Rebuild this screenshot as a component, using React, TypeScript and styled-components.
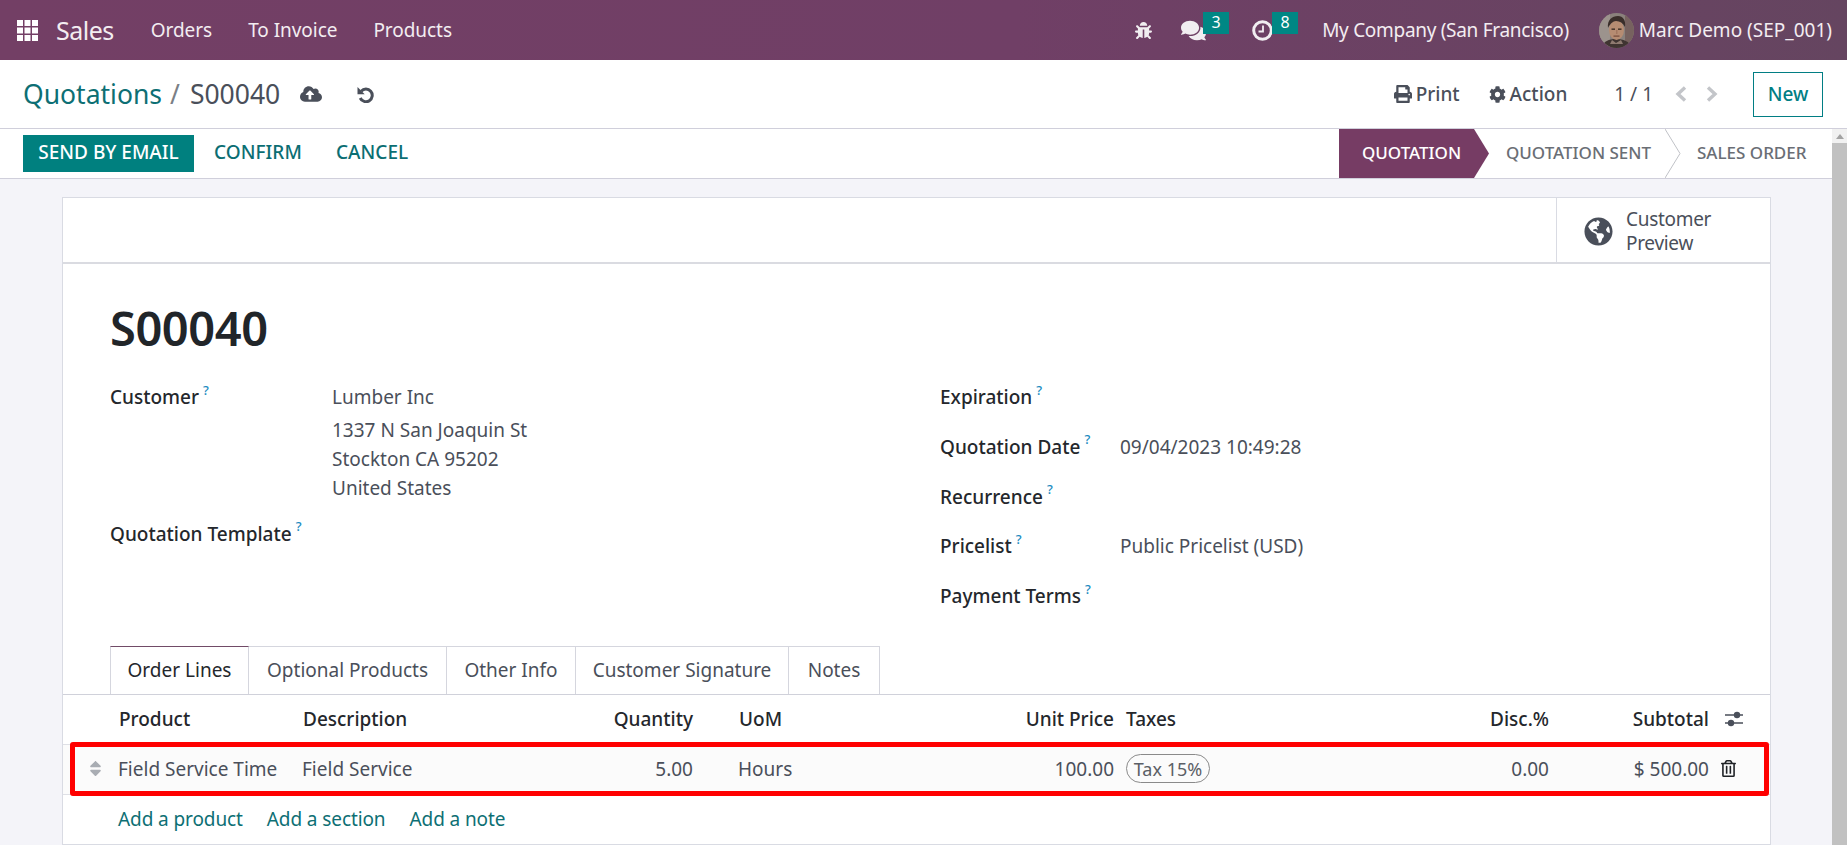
import React from "react";
import styled, { createGlobalStyle } from "styled-components";
import { FaBug, FaComments, FaPrint, FaCog, FaCloudUploadAlt, FaGlobeAmericas, FaRegTrashAlt, FaSort } from "react-icons/fa";

const Global = createGlobalStyle`
  html, body { margin: 0; padding: 0; height: 100%; overflow: hidden; background: #fff; }
  body { font-family: "Noto Sans", "Open Sans", sans-serif; color: #4a4f5a; }
  * { box-sizing: border-box; }
`;

const Page = styled.div`
  width: 1847px; height: 845px; display: flex; flex-direction: column; overflow: hidden;
`;
const Navbar = styled.header`
  height: 60px; flex: none; display: flex; align-items: center; padding: 0 15px 0 17px; color: #f3edf1;
  background: linear-gradient(90deg, #733f65 0%, #703f66 55%, #654560 100%);
`;
const AppGrid = styled.svg`width: 21px; height: 21px; fill: #fff; flex: none;`;
const Brand = styled.span`font-size: 25px; margin-left: 18px; margin-right: 37px; letter-spacing: -0.5px;`;
const MenuItem = styled.span`font-size: 19px; margin-right: 36px; letter-spacing: -0.05px;`;
const Spacer = styled.div`flex: 1;`;
const NavIconWrap = styled.span<{ $mr: number }>`
  position: relative; display: flex; align-items: center; margin-right: ${p => p.$mr}px; color: #f1eef1;
`;
const Badge = styled.span<{ $left: number; $top: number }>`
  position: absolute; left: ${p => p.$left}px; top: ${p => p.$top}px; width: 26px; height: 22px; background: #008784; color: #fff;
  font-size: 16px; display: flex; align-items: center; justify-content: center; padding-bottom: 2px;
`;
const NavText = styled.span<{ $ls: number }>`font-size: 19px; letter-spacing: ${p => p.$ls}px; white-space: nowrap;`;
const Avatar = styled.svg`width: 35px; height: 35px; margin: 0 5px 0 30px; flex: none;`;
const ClockIcon = styled.svg`width: 21px; height: 21px; display: block;`;

const ControlPanel = styled.div`
  height: 69px; flex: none; display: flex; align-items: center; padding: 0 24px; background: #fff;
  border-bottom: 1px solid #d0cfdb;
`;
const Crumb = styled.a`font-size: 26.5px; color: #0d6f74; margin-left: -1px;`;
const CrumbSep = styled.span`font-size: 26.5px; color: #7b7f86; margin: 0 10px 0 8px;`;
const CrumbCur = styled.span`font-size: 26.5px; color: #4a4f5a;`;
const SaveIcon = styled.span<{ $ml: number }>`display: flex; margin-left: ${p => p.$ml}px; color: #4a4f5a;`;
const UndoIcon = styled.svg`width: 17px; height: 17px; display: block;`;
const CpAction = styled.span<{ $ml?: number }>`
  display: flex; align-items: center; gap: 4px; font-size: 19px; color: #4a4f5a; font-weight: 500; margin-left: ${p => p.$ml ?? 0}px;
`;
const CpRight = styled.div`display: flex; align-items: center;`;
const Pager = styled.span`font-size: 19px; color: #4a4f5a; margin-left: 47px;`;
const PagerArrow = styled.svg<{ $ml: number }>`width: 12px; height: 16px; display: block; margin-left: ${p => p.$ml}px;`;
const NewBtn = styled.button`
  width: 70px; height: 45px; margin-left: 35px; background: #fff; border: 1px solid #017e84; color: #017e84;
  font: 500 19px "Noto Sans", sans-serif; padding: 0;
`;

const Body = styled.div`flex: 1; display: flex; min-height: 0; background: #f4f4f9;`;
const Scroll = styled.div`flex: 1; min-width: 0; display: flex; flex-direction: column;`;
const StatusRow = styled.div`
  height: 50px; flex: none; display: flex; align-items: center; justify-content: space-between; background: #fff;
  border-bottom: 1px solid #d0cfdb; padding-left: 23px;
`;
const Btns = styled.div`display: flex; align-items: center;`;
const Primary = styled.button`
  width: 171px; height: 37px; background: #00807f; border: 0; color: #fff; padding: 0 0 3px;
  font: 500 19px "Noto Sans", sans-serif;
`;
const Secondary = styled.span<{ $ml: number }>`
  margin-left: ${p => p.$ml}px; color: #0b6e73; font-size: 19px; font-weight: 500; padding-bottom: 3px; letter-spacing: 0.05px;
`;
const Stages = styled.div`display: flex; height: 49px; align-items: center; position: relative;`;
const StageActive = styled.div`
  width: 150px; height: 49px; padding-left: 23px; padding-bottom: 2px; display: flex; align-items: center; color: #fff; background: #763c64;
  font-size: 17px; font-weight: 500; clip-path: polygon(0 0, 135px 0, 100% 50%, 135px 100%, 0 100%);
`;
const Stage = styled.div<{ $w: number; $pl: number }>`
  width: ${p => p.$w}px; padding-left: ${p => p.$pl}px; padding-bottom: 2px; color: #6a6e75; font-size: 17px; font-weight: 500;
  white-space: nowrap;
`;
const StageChevron = styled.svg`width: 16px; height: 49px; flex: none;`;
const Track = styled.div`
  width: 15px; flex: none; background: #f1f1f1; display: flex; flex-direction: column; align-items: center;
`;
const ArrowUp = styled.div`
  margin: 5px 0 4px; width: 0; height: 0; border-left: 4px solid transparent; border-right: 4px solid transparent;
  border-bottom: 5px solid #a3a3a3;
`;
const Thumb = styled.div`flex: 1; width: 100%; background: #c1c1c1;`;

const Sheet = styled.main`
  width: 1709px; margin: 18px 0 0 62px; background: #fff; border: 1px solid #d9dbe3; flex: none; height: 648px;
`;
const ButtonBox = styled.div`
  height: 66px; display: flex; justify-content: flex-end; border-bottom: 2px solid #dadbe1;
`;
const StatButton = styled.div`
  width: 214px; display: flex; align-items: center; padding: 2px 0 0 27px; gap: 13px; border-left: 1px solid #d9dbe3;
  color: #4a4f5a; font-size: 19px; line-height: 24px; letter-spacing: -0.3px;
`;
const SheetBody = styled.div`padding: 34px 0 0 0;`;
const Title = styled.h1`
  margin: 0 0 25px 47px; font-size: 47px; line-height: 60px; font-weight: 600; color: #212529; letter-spacing: -0.45px;
`;
const FormGrid = styled.div`display: grid; grid-template-columns: 830px 1fr; padding-left: 47px;`;
const FormCol = styled.div<{ $gap: number }>`display: flex; flex-direction: column; gap: ${p => p.$gap}px;`;
const Row = styled.div<{ $lw: number }>`display: grid; grid-template-columns: ${p => p.$lw}px 1fr; line-height: 29px; font-size: 19px;`;
const Label = styled.label`font-weight: 500; color: #24272c; white-space: nowrap;`;
const Help = styled.sup`color: #1a8bbf; font-size: 13px; font-weight: 500; margin-left: 4px; line-height: 0; position: relative; top: -2px;`;
const Value = styled.div`color: #4a4f5a;`;
const NameLine = styled.div`margin-bottom: 4px;`;

const Tabs = styled.nav`
  margin-top: 35px; height: 49px; display: flex; padding-left: 47px; border-bottom: 1px solid #d0d1da;
`;
const Tab = styled.div<{ $w: number; $active?: boolean }>`
  width: ${p => p.$w}px; height: 48px; display: flex; align-items: center; justify-content: center; padding-bottom: 2px;
  font-size: 19px; white-space: nowrap;
  color: ${p => (p.$active ? "#24272c" : "#4a4f5a")};
  border: 1px solid #d5d6de; border-left-width: ${p => (p.$active ? 1 : 0)}px; border-bottom: 0;
  border-top: 1px solid ${p => (p.$active ? "#714b67" : "#d5d6de")};
`;
const COLS = "56px 184px 250px 140px 221px 200px 335px 100px 160px 61px";
const HeadRow = styled.div`
  display: grid; grid-template-columns: ${COLS}; height: 50px; align-items: center; font-size: 19px; font-weight: 500;
  color: #24272c; border-bottom: 1px solid #dfe0e6; padding-bottom: 1px;
`;
const LineRow = styled.div`
  position: relative; display: grid; grid-template-columns: ${COLS}; height: 50px; align-items: center; font-size: 19px;
  color: #4a4f5a; background: #fbfbfb; border-bottom: 1px solid #dfe0e6; padding-bottom: 2px;
`;
const Cell = styled.div<{ $right?: boolean; $pl?: number; $ml?: number }>`
  text-align: ${p => (p.$right ? "right" : "left")}; padding-left: ${p => p.$pl ?? 0}px; margin-left: ${p => p.$ml ?? 0}px; white-space: nowrap;
`;
const Handle = styled.div`display: flex; justify-content: flex-end; padding-right: 14px; color: #a9adb3;`;
const TaxPill = styled.span`
  display: inline-flex; align-items: center; justify-content: center; width: 84px; height: 29px; border: 1.5px solid #8a8a8a;
  border-radius: 15px; font-size: 18px; color: #5b5f66;
`;
const Highlight = styled.div`
  position: absolute; left: 7px; right: 1px; top: -3px; bottom: -2px; border: 5px solid #ff0000; border-radius: 3px; pointer-events: none;
`;
const AddRow = styled.div`display: flex; gap: 24px; height: 49px; align-items: center; padding-left: 55px; font-size: 19px; padding-bottom: 2px; letter-spacing: -0.1px;`;
const AddLink = styled.a`color: #0d6f74;`;
const SliderIcon = styled.svg`width: 20px; height: 20px; margin-left: 15px; display: block;`;
const TrashWrap = styled.div`padding-left: 11px; display: flex; color: #1f2226;`;

const helpMark = <Help>?</Help>;

export default function App() {
  return (
    <Page>
      <Global />
      <Navbar>
        <AppGrid viewBox="0 0 21 21">
          {[0, 7.5, 15].flatMap(y => [0, 7.5, 15].map(x => <rect key={`${x}-${y}`} x={x} y={y} width="6" height="6" />))}
        </AppGrid>
        <Brand>Sales</Brand>
        <MenuItem>Orders</MenuItem>
        <MenuItem>To Invoice</MenuItem>
        <MenuItem>Products</MenuItem>
        <Spacer />
        <NavIconWrap $mr={29}><FaBug size={17} /></NavIconWrap>
        <NavIconWrap $mr={46}><FaComments size={25} /><Badge $left={22} $top={-6}>3</Badge></NavIconWrap>
        <NavIconWrap $mr={49}>
          <ClockIcon viewBox="0 0 21 21">
            <circle cx="10.5" cy="10.5" r="8.8" fill="none" stroke="#f1eef1" strokeWidth="3" />
            <path d="M11 5.5v6H6.5" fill="none" stroke="#f1eef1" strokeWidth="1.8" />
          </ClockIcon>
          <Badge $left={20} $top={-8}>8</Badge>
        </NavIconWrap>
        <NavText $ls={-0.3}>My Company (San Francisco)</NavText>
        <Avatar viewBox="0 0 35 35">
          <defs>
            <clipPath id="av"><circle cx="17.5" cy="17.5" r="17.5" /></clipPath>
          </defs>
          <g clipPath="url(#av)">
            <rect width="35" height="35" fill="#8a817c" />
            <rect x="0" y="0" width="11" height="35" fill="#9c938d" />
            <rect x="26" y="0" width="9" height="35" fill="#77625f" />
            <path d="M3 35c1-7 7-9 14-9s14 2 15 9z" fill="#3f3431" />
            <path d="M13 27l4 3 5-3 2 4H11z" fill="#8e7a70" />
            <ellipse cx="17.5" cy="17" rx="7.5" ry="10" fill="#b68c72" />
            <path d="M9 15c-1-8 4-12 10-12 5 0 8 4 7 11-2-4-5-6-9-6-3 0-6 3-8 7z" fill="#3a2e2a" />
            <rect x="12.5" y="15.5" width="3.5" height="1.3" fill="#33261f" />
            <rect x="19" y="15.5" width="3.5" height="1.3" fill="#33261f" />
            <rect x="17" y="17" width="1.5" height="4" fill="#a3775f" />
            <rect x="14.5" y="22.5" width="6" height="1.2" fill="#74493a" />
          </g>
        </Avatar>
        <NavText $ls={0}>Marc Demo (SEP_001)</NavText>
      </Navbar>

      <ControlPanel>
        <Crumb>Quotations</Crumb>
        <CrumbSep>/</CrumbSep>
        <CrumbCur>S00040</CrumbCur>
        <SaveIcon $ml={20}><FaCloudUploadAlt size={22} /></SaveIcon>
        <SaveIcon $ml={35}>
          <UndoIcon viewBox="0 0 17 17">
            <path d="M4.2 5.2A6.3 6.3 0 1 1 3.2 12" fill="none" stroke="#4a4f5a" strokeWidth="3" />
            <path d="M0.5 1v7.2h7.2z" fill="#4a4f5a" />
          </UndoIcon>
        </SaveIcon>
        <Spacer />
        <CpRight>
          <CpAction><FaPrint size={18} />Print</CpAction>
          <CpAction $ml={29}><FaCog size={17} />Action</CpAction>
          <Pager>1 / 1</Pager>
          <PagerArrow $ml={22} viewBox="0 0 12 16"><path d="M10 1.5L3 8l7 6.5" fill="none" stroke="#c3c5c9" strokeWidth="3.4" /></PagerArrow>
          <PagerArrow $ml={19} viewBox="0 0 12 16"><path d="M2 1.5L9 8l-7 6.5" fill="none" stroke="#c3c5c9" strokeWidth="3.4" /></PagerArrow>
          <NewBtn>New</NewBtn>
        </CpRight>
      </ControlPanel>

      <Body>
        <Scroll>
          <StatusRow>
            <Btns>
              <Primary>SEND BY EMAIL</Primary>
              <Secondary $ml={20}>CONFIRM</Secondary>
              <Secondary $ml={34}>CANCEL</Secondary>
            </Btns>
            <Stages>
              <StageActive>QUOTATION</StageActive>
              <Stage $w={176} $pl={17}>QUOTATION SENT</Stage>
              <StageChevron viewBox="0 0 16 49"><path d="M0 0 L15 24.5 L0 49" fill="none" stroke="#c0c2c7" strokeWidth="1" /></StageChevron>
              <Stage $w={151} $pl={16}>SALES ORDER</Stage>
            </Stages>
          </StatusRow>

          <Sheet>
            <ButtonBox>
              <StatButton>
                <FaGlobeAmericas size={29} color="#4a4f5a" />
                <span>Customer<br />Preview</span>
              </StatButton>
            </ButtonBox>
            <SheetBody>
              <Title>S00040</Title>
              <FormGrid>
                <FormCol $gap={16.5}>
                  <Row $lw={222}>
                    <Label>Customer{helpMark}</Label>
                    <Value>
                      <NameLine>Lumber Inc</NameLine>
                      1337 N San Joaquin St<br />Stockton CA 95202<br />United States
                    </Value>
                  </Row>
                  <Row $lw={222}>
                    <Label>Quotation Template{helpMark}</Label>
                    <Value />
                  </Row>
                </FormCol>
                <FormCol $gap={20.8}>
                  <Row $lw={180}><Label>Expiration{helpMark}</Label><Value /></Row>
                  <Row $lw={180}><Label>Quotation Date{helpMark}</Label><Value>09/04/2023 10:49:28</Value></Row>
                  <Row $lw={180}><Label>Recurrence{helpMark}</Label><Value /></Row>
                  <Row $lw={180}><Label>Pricelist{helpMark}</Label><Value>Public Pricelist (USD)</Value></Row>
                  <Row $lw={180}><Label>Payment Terms{helpMark}</Label><Value /></Row>
                </FormCol>
              </FormGrid>
              <Tabs>
                <Tab $w={139} $active>Order Lines</Tab>
                <Tab $w={198}>Optional Products</Tab>
                <Tab $w={129}>Other Info</Tab>
                <Tab $w={213}>Customer Signature</Tab>
                <Tab $w={91}>Notes</Tab>
              </Tabs>
              <HeadRow>
                <div />
                <Cell>Product</Cell>
                <Cell>Description</Cell>
                <Cell $right>Quantity</Cell>
                <Cell $pl={46}>UoM</Cell>
                <Cell $right>Unit Price</Cell>
                <Cell $pl={12}>Taxes</Cell>
                <Cell $right>Disc.%</Cell>
                <Cell $right>Subtotal</Cell>
                <SliderIcon viewBox="0 0 20 20">
                  <path d="M1 6h18M1 14h18" stroke="#4a4f5a" strokeWidth="1.6" />
                  <circle cx="13" cy="6" r="3.2" fill="#4a4f5a" />
                  <circle cx="7" cy="14" r="3.2" fill="#4a4f5a" />
                </SliderIcon>
              </HeadRow>
              <LineRow>
                <Handle><FaSort size={19} /></Handle>
                <Cell $ml={-1}>Field Service Time</Cell>
                <Cell $ml={-1}>Field Service</Cell>
                <Cell $right>5.00</Cell>
                <Cell $pl={46} $ml={-1}>Hours</Cell>
                <Cell $right>100.00</Cell>
                <Cell $pl={12}><TaxPill>Tax 15%</TaxPill></Cell>
                <Cell $right>0.00</Cell>
                <Cell $right>$ 500.00</Cell>
                <TrashWrap><FaRegTrashAlt size={17} /></TrashWrap>
                <Highlight />
              </LineRow>
              <AddRow>
                <AddLink>Add a product</AddLink>
                <AddLink>Add a section</AddLink>
                <AddLink>Add a note</AddLink>
              </AddRow>
            </SheetBody>
          </Sheet>
        </Scroll>
        <Track>
          <ArrowUp />
          <Thumb />
        </Track>
      </Body>
    </Page>
  );
}
